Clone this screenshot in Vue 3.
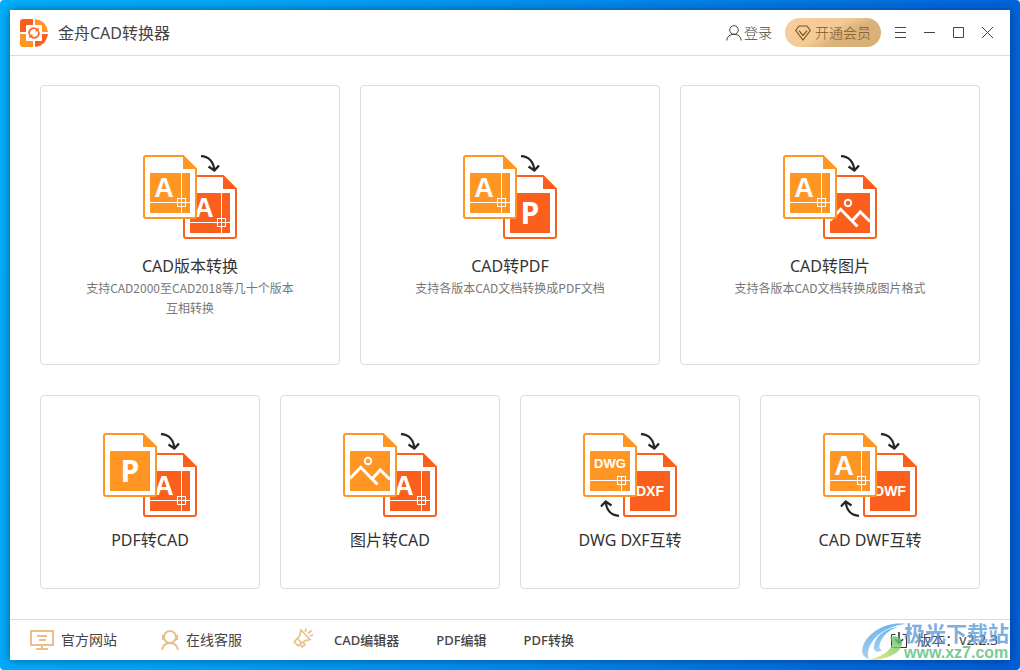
<script setup>
const primary = [
  { title: 'CAD版本转换', desc: '支持CAD2000至CAD2018等几十个版本互相转换', front: 'A', back: 'A' },
  { title: 'CAD转PDF', desc: '支持各版本CAD文档转换成PDF文档', front: 'A', back: 'P' },
  { title: 'CAD转图片', desc: '支持各版本CAD文档转换成图片格式', front: 'A', back: 'image' },
]
const secondary = [
  { title: 'PDF转CAD', front: 'P', back: 'A' },
  { title: '图片转CAD', front: 'image', back: 'A' },
  { title: 'DWG DXF互转', front: 'DWG', back: 'DXF', both: true },
  { title: 'CAD DWF互转', front: 'A', back: 'DWF', both: true },
]
const rows = [
  { name: 'primary', cards: primary },
  { name: 'secondary', cards: secondary },
]
const sheets = (card) => [
  { kind: card.back, color: '#fa5f1e', move: 'translate(40 20)' },
  { kind: card.front, color: '#ff9623', move: 'translate(0 0)' },
]
</script>

<template>
  <div class="desktop">
    <div class="window">
      <header class="titlebar">
        <svg class="logo" viewBox="0 0 28 28" aria-hidden="true">
          <path d="M3 0H13V13H0V3Q0 0 3 0Z" fill="#fa5f1e" />
          <path d="M15 0Q26 1 28 13H15Z" fill="#ff9623" />
          <path d="M0 15H13V28H3Q0 28 0 25Z" fill="#ff9623" />
          <path d="M15 15H28Q26 27 15 28Z" fill="#fa5f1e" />
          <rect x="6" y="6" width="16" height="16" rx="1" fill="#fff" />
          <path d="M9.4 15.5A4.7 4.7 0 0 1 17 10.5M18.6 12.5A4.7 4.7 0 0 1 11 17.5" fill="none" stroke="#fa6a22" stroke-width="1.8" />
          <path d="M18.8 8.4V12.6H14.8ZM9.2 19.6V15.4H13.2Z" fill="#fa6a22" />
        </svg>
        <h1>金舟CAD转换器</h1>
        <button class="login">
          <svg width="16" height="16" viewBox="0 0 16 16" class="line" aria-hidden="true">
            <circle cx="8" cy="5" r="4.3" />
            <path d="M.7 15.5Q1.5 9.3 8 9.3T15.3 15.5" />
          </svg>
          登录
        </button>
        <button class="vip">
          <svg width="16" height="16" viewBox="0 0 16 16" class="line" aria-hidden="true">
            <path d="M4 1H12L15.3 5.5L8 15L.7 5.5ZM4 5.7L8 10.5L12 5.7" stroke-width="1.2" />
          </svg>
          开通会员
        </button>
        <div class="controls">
          <button aria-label="菜单"><svg viewBox="0 0 13 13"><path d="M1 1.5H12M1 6.5H12M1 11.5H12" /></svg></button>
          <button aria-label="最小化"><svg viewBox="0 0 13 13"><path d="M1 6.5H12" /></svg></button>
          <button aria-label="最大化"><svg viewBox="0 0 13 13"><path d="M1.5 1.5H11.5V11.5H1.5Z" /></svg></button>
          <button aria-label="关闭"><svg viewBox="0 0 13 13"><path d="M1 1L12 12M12 1L1 12" /></svg></button>
        </div>
      </header>

      <main>
        <div v-for="row in rows" :key="row.name" class="row" :class="row.name">
          <button v-for="card in row.cards" :key="card.title" class="card">
            <svg class="convert" viewBox="0 0 94 84" aria-hidden="true">
              <g v-for="(s, i) in sheets(card)" :key="i" :transform="s.move">
                <path d="M3 1H40L53 14V61Q53 63 51 63H3Q1 63 1 61V3Q1 1 3 1Z" fill="#fff" :stroke="s.color" stroke-width="2" />
                <path d="M40 0L54 14H40Z" :fill="s.color" />
                <rect x="7" y="18" width="40" height="40" :fill="s.color" />
                <g v-if="s.kind === 'A' || s.kind === 'DWG'" fill="none" stroke="#fff">
                  <path :d="s.kind === 'A' ? 'M38.5 18V58M7 47.5H47' : 'M38.5 43V58M7 47.5H47'" />
                  <rect x="34.5" y="43.5" width="8" height="8" />
                </g>
                <g v-if="s.kind === 'image'" fill="none" stroke="#fff" stroke-width="3">
                  <circle cx="25" cy="28" r="3.2" stroke-width="2" />
                  <path d="M7 45.5L17.7 34.3L34.5 51.5M29.5 45.5L37.3 37L47 46.5" />
                </g>
                <text v-else-if="s.kind === 'A'" x="21" y="42" class="glyph a">A</text>
                <text v-else-if="s.kind === 'P'" x="27" y="49" class="glyph p">P</text>
                <text v-else-if="s.kind === 'DWG'" x="27" y="35" class="glyph dwg">DWG</text>
                <text v-else x="27" y="43" class="glyph ext">{{ s.kind }}</text>
              </g>
              <g fill="none" stroke="#252525" stroke-width="2.3">
                <path d="M58 1.2C66 1.5 70.5 7 71.3 15M65.5 11.5L71.4 15.6L76 10.5" />
                <path v-if="card.both" d="M36 82.8C28 82.5 23.5 77 22.7 69M28.5 72.5L22.6 68.4L18 73.5" />
              </g>
            </svg>
            <span class="name">{{ card.title }}</span>
            <span v-if="card.desc" class="desc">{{ card.desc }}</span>
          </button>
        </div>
      </main>

      <footer>
        <a href="#" class="site">
          <svg width="24" height="20" viewBox="0 0 24 20" class="gold" aria-hidden="true">
            <path d="M1 1H23V15H1ZM12 15V19M6 19H18M7 6H17M9 10H16" />
          </svg>
          官方网站
        </a>
        <a href="#" class="service">
          <svg width="18" height="20" viewBox="0 0 18 20" class="gold" aria-hidden="true">
            <circle cx="9" cy="7" r="6" />
            <path d="M2 5V10M16 5V10M1 20Q2 13 9 13T17 20" />
          </svg>
          在线客服
        </a>
        <svg class="horn gold" viewBox="0 0 20 20" aria-hidden="true">
          <path d="M8 2L17 11.5L11.5 13L5 17.8L1.3 14L6.5 8ZM4.5 10.5L8.5 15M7 16.5L9.3 19L11.8 16.8L10.5 14M12.3 4L13 .5M15 5.5L18.5 2.5M16.5 8L20 7.2" stroke-width="1.7" />
        </svg>
        <nav>
          <a href="#">CAD编辑器</a>
          <a href="#">PDF编辑</a>
          <a href="#">PDF转换</a>
        </nav>
        <div class="version">
          <svg width="16" height="16" viewBox="0 0 16 16" class="update" aria-hidden="true">
            <path d="M4.5 2.5H.5V15.5H15.5V2.5H11.5" />
            <path d="M8 0V11M4 7.2L8 11.2L12 7.2" stroke-width="1.6" />
          </svg>
          版本：v2.2.3
        </div>
      </footer>
    </div>

    <div class="watermark">
      <svg viewBox="0 0 46 40" aria-hidden="true">
        <defs>
          <linearGradient id="swirl" x1="0" y1="0" x2="0" y2="1">
            <stop offset="0" stop-color="#4ba3e6" />
            <stop offset="1" stop-color="#8dc5ee" />
          </linearGradient>
          <linearGradient id="leaf" x1="1" y1="0" x2="0" y2="1">
            <stop offset="0" stop-color="#48bf72" />
            <stop offset=".55" stop-color="#a8d968" />
            <stop offset="1" stop-color="#f3e36b" />
          </linearGradient>
        </defs>
        <path d="M45 2C26-1 7 10 2 24C0 31 2 35 8 37C5 31 8 23 15 15C23 7 34 3 45 2Z" fill="url(#swirl)" />
        <path d="M37 5C24 6 14 15 13 24C12 30 17 31 21 28C17 27 18 22 21 17C25 10 31 7 37 5Z" fill="url(#swirl)" />
        <path d="M29 15C34 13 40 15 41 20C42 30 26 39 7 38C20 35 30 29 31 22C31 19 30 17 29 15Z" fill="url(#leaf)" />
      </svg>
      <div class="mark">
        <span class="mark-name">极光下载站</span>
        <span class="mark-url">www.xz7.com</span>
      </div>
    </div>
  </div>
</template>

<style>
body {
  background: #fff;
}
</style>

<style scoped>
* {
  box-sizing: border-box;
}
.desktop {
  position: relative;
  min-height: 100vh;
  padding: 10px;
  display: flex;
  border-radius: 4px;
  background: linear-gradient(100deg, #00b0fc 0%, #00a6f7 25%, #008aed 55%, #0066dc 88%, #005fd8 100%);
  font-family: "Noto Sans", "Noto Sans CJK SC", sans-serif;
  color: #444;
  overflow: hidden;
}
.window {
  flex: 1;
  display: flex;
  flex-direction: column;
  background: #fff;
  box-shadow: 0 0 10px rgba(0, 20, 60, 0.5);
}
button {
  border: 0;
  padding: 0;
  background: none;
  font: inherit;
  color: inherit;
}
a {
  color: inherit;
  text-decoration: none;
}
.titlebar {
  height: 46px;
  flex: none;
  display: flex;
  align-items: center;
  padding: 0 16px 0 10px;
  border-bottom: 1px solid #dcdcdc;
}
.logo {
  width: 28px;
  height: 28px;
}
h1 {
  margin: 0 auto 0 10px;
  font-size: 16px;
  line-height: 24px;
  font-weight: 400;
}
.line {
  fill: none;
  stroke: currentColor;
}
.login,
.vip {
  display: flex;
  align-items: center;
  font-size: 14px;
  line-height: 20px;
  font-weight: 300;
}
.login {
  gap: 2px;
  margin-right: 13px;
}
.vip {
  gap: 4px;
  height: 29px;
  padding: 0 10px;
  border-radius: 15px;
  background: linear-gradient(150deg, #f8cf9f 0%, #f3ca95 45%, #dab27b 62%, #d9ae72 100%);
  color: #7d5422;
}
.controls {
  display: flex;
  gap: 16px;
  margin-left: 13px;
}
.controls button {
  width: 13px;
  height: 13px;
  display: flex;
}
.controls svg {
  width: 13px;
  height: 13px;
  fill: none;
  stroke: #444;
}
main {
  flex: 1;
  display: flex;
  flex-direction: column;
  gap: 30px;
  padding: 29px 30px 30px;
}
.row {
  display: grid;
  grid-auto-flow: column;
  grid-auto-columns: 1fr;
  gap: 20px;
}
.primary {
  flex: 280;
}
.secondary {
  flex: 194;
}
.card {
  display: flex;
  flex-direction: column;
  align-items: center;
  border: 1px solid #dcdcdc;
  border-radius: 4px;
  padding-top: 69px;
}
.secondary .card {
  padding-top: 37px;
}
.convert {
  width: 94px;
  height: 84px;
}
.glyph {
  font-family: "Liberation Sans", Arial, sans-serif;
  font-weight: 700;
  fill: #fff;
  text-anchor: middle;
}
.a {
  font-size: 27px;
}
.p {
  font-family: "Open Sans", sans-serif;
  font-size: 30px;
}
.dwg {
  font-size: 13px;
}
.ext {
  font-size: 14px;
}
.name {
  margin-top: 16px;
  font-size: 16px;
  line-height: 22px;
  color: #333;
}
.secondary .name {
  margin-top: 12px;
}
.desc {
  max-width: 218px;
  margin-top: 1px;
  font-family: "Noto Sans CJK SC", sans-serif;
  font-size: 12px;
  line-height: 20px;
  color: #777;
}
footer {
  height: 41px;
  flex: none;
  display: flex;
  align-items: center;
  padding: 0 12px 0 20px;
  border-top: 1px solid #dcdcdc;
  font-size: 14px;
  line-height: 20px;
}
.gold {
  fill: none;
  stroke: #e9c08c;
  stroke-width: 2;
}
.site,
.service {
  display: flex;
  align-items: center;
  gap: 7px;
  margin-right: 44px;
}
.horn {
  width: 20px;
  height: 20px;
  margin: 0 21px 4px 7px;
}
nav {
  display: flex;
  gap: 37px;
  font-size: 13px;
  font-weight: 500;
}
.version {
  display: flex;
  align-items: center;
  gap: 10px;
  margin-left: auto;
}
.update {
  fill: none;
  stroke: #333;
}
.watermark {
  position: absolute;
  right: 11px;
  bottom: 8px;
  display: flex;
  align-items: center;
  opacity: 0.8;
  pointer-events: none;
}
.watermark svg {
  width: 46px;
  height: 40px;
  margin-right: -3px;
}
.mark {
  display: flex;
  flex-direction: column;
}
.mark-name {
  font-size: 21px;
  line-height: 22px;
  font-weight: 700;
  color: #609ad9;
}
.mark-url {
  font-family: "Liberation Sans", Arial, sans-serif;
  font-size: 16px;
  line-height: 18px;
  font-weight: 700;
  color: #55c07a;
}
</style>
